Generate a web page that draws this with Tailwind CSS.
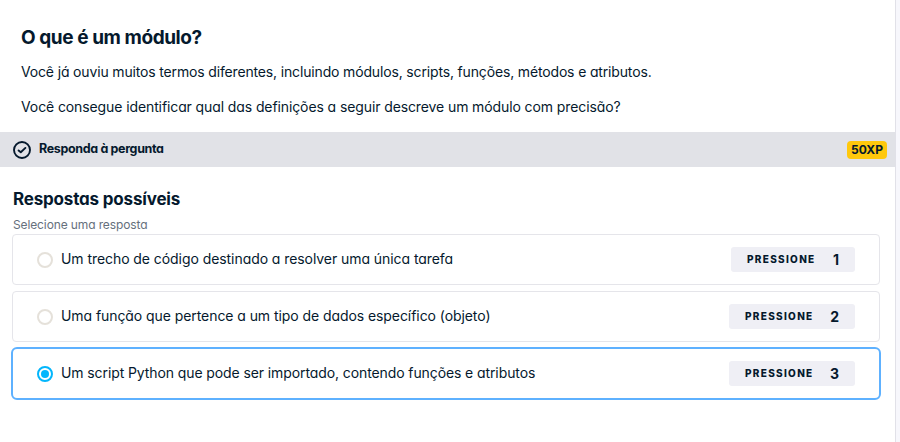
<!DOCTYPE html>
<html lang="pt-BR">
<head>
<meta charset="utf-8">
<title>O que é um módulo?</title>
<script src="https://cdn.jsdelivr.net/npm/@tailwindcss/browser@4"></script>
</head>
<body class="flex h-[442px] w-[900px] overflow-hidden bg-[#f7f7fc] font-['Inter','Liberation_Sans',sans-serif] text-[#05192d] [font-feature-settings:'cv11']">
<main class="h-full w-[896px] border-r border-[#e1e1e8] bg-white whitespace-nowrap">
  <section class="h-[132px] pt-[26px] pl-[21px]">
    <h1 class="h-6 text-[19px] leading-6 font-bold tracking-[-0.43px]">O que é um módulo?</h1>
    <p class="mt-3 h-5 text-[14px] leading-5 tracking-[-0.156px]">Você já ouviu muitos termos diferentes, incluindo módulos, scripts, funções, métodos e atributos.</p>
    <p class="mt-[15px] h-5 text-[14px] leading-5 tracking-[-0.105px]">Você consegue identificar qual das definições a seguir descreve um módulo com precisão?</p>
  </section>
  <div class="flex h-[35px] items-center bg-[#e1e2e7] pr-2 pl-[13px]">
    <svg class="size-[18px]" viewBox="0 0 18 18" fill="none" stroke="#05192d" stroke-width="1.9"><circle cx="9" cy="9" r="8"/><path d="M5.6 9.4 7.8 11.2 12.4 6.9" stroke-linecap="round" stroke-linejoin="round"/></svg>
    <h2 class="relative -top-px ml-2 text-[12.5px] leading-5 font-bold tracking-[-0.35px]">Responda à pergunta</h2>
    <span class="ml-auto flex h-[18px] w-10 items-center justify-center rounded bg-[#ffc80c] text-[12px] font-bold">50XP</span>
  </div>
  <section class="pt-5 pl-3">
    <h3 class="ml-px h-6 text-[17px] leading-6 font-bold tracking-[-0.18px]">Respostas possíveis</h3>
    <p class="mt-[5px] ml-px h-[18px] text-[12px] leading-[18px] tracking-[-0.12px] text-[#65707c]">Selecione uma resposta</p>
    <ul class="w-[868px]">
      <li class="flex h-[51px] items-center rounded border border-[#e5e5ea] pr-6 pl-6">
        <span class="size-4 rounded-full border-2 border-[#e5e1da]"></span>
        <span class="ml-2 pb-0.5 text-[14px] leading-5 tracking-[-0.065px]">Um trecho de código destinado a resolver uma única tarefa</span>
        <span class="ml-auto flex h-[25px] w-[124px] items-center justify-between rounded-[3px] bg-[#efeff5] pr-4 pl-4 font-bold"><span class="text-[10px] font-extrabold tracking-[1.3px]">PRESSIONE</span><span class="text-[14px]">1</span></span>
      </li>
      <li class="mt-1.5 flex h-[51px] items-center rounded border border-[#e5e5ea] pr-6 pl-6">
        <span class="size-4 rounded-full border-2 border-[#e5e1da]"></span>
        <span class="ml-2 pb-0.5 text-[14px] leading-5 tracking-[-0.07px]">Uma função que pertence a um tipo de dados específico (objeto)</span>
        <span class="ml-auto flex h-[25px] w-[126px] items-center justify-between rounded-[3px] bg-[#efeff5] pr-4 pl-4 font-bold"><span class="text-[10px] font-extrabold tracking-[1.3px]">PRESSIONE</span><span class="text-[14px]">2</span></span>
      </li>
      <li class="mt-[5px] -ml-px flex h-[53px] w-[870px] items-center rounded-md border-2 border-[#5eb1ff] pr-6 pl-6">
        <span class="flex size-4 items-center justify-center rounded-full border-2 border-[#03b6fc]"><span class="size-2 rounded-full bg-[#03b6fc]"></span></span>
        <span class="ml-2 pb-0.5 text-[14px] leading-5 tracking-[-0.1px]">Um script Python que pode ser importado, contendo funções e atributos</span>
        <span class="ml-auto flex h-[25px] w-[126px] items-center justify-between rounded-[3px] bg-[#efeff5] pr-4 pl-4 font-bold"><span class="text-[10px] font-extrabold tracking-[1.3px]">PRESSIONE</span><span class="text-[14px]">3</span></span>
      </li>
    </ul>
  </section>
</main>
</body>
</html>
